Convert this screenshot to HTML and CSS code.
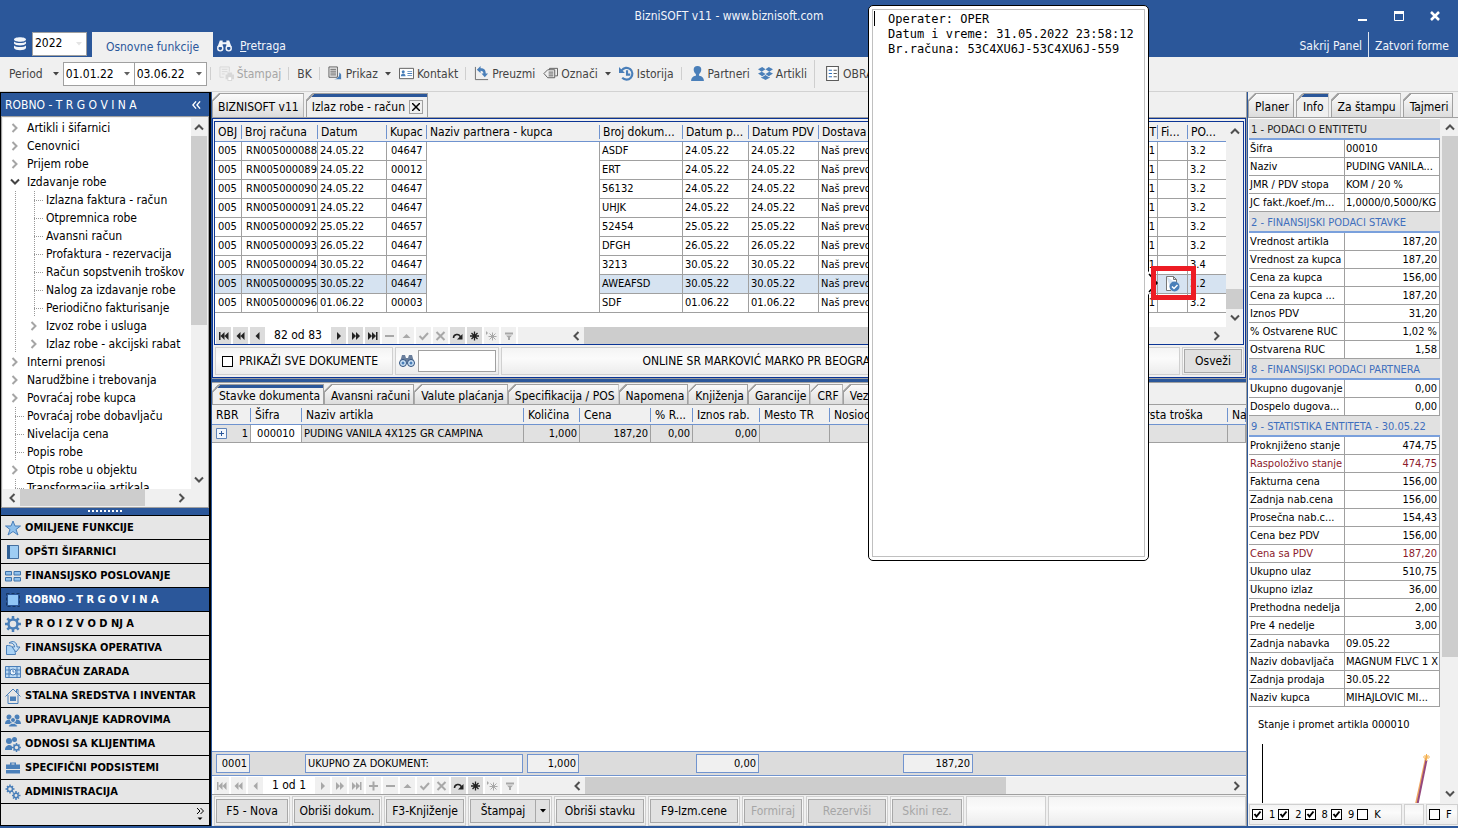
FILE: index.html
```html
<!DOCTYPE html>
<html lang="sr">
<head>
    <meta charset="UTF-8">
    <meta name="viewport" content="width=device-width, initial-scale=1.0">
    <title>BizniSOFT v11 - www.biznisoft.com</title>
    <link rel="stylesheet" href="styles.css">
</head>
<body>
<svg class="defs" aria-hidden="true">
    <symbol id="i-db" viewBox="0 0 12 14"><path d="M0 2.500C0-.5 12-.5 12 2.500S0 5.500 0 2.500zM0 4.500c2 2 10 2 12 0v2c-1 2.500-11 2.500-12 0zM0 8.500c2 2 10 2 12 0v2.500c-1 3-11 3-12 0z" fill="currentColor"/></symbol>
    <symbol id="i-binoc" viewBox="0 0 16 14"><path d="M3 1h3v2h4V1h3l2.500 7H10V5H6v3H.5z" fill="currentColor"/><circle cx="3.500" cy="9.500" r="2.700" fill="none" stroke="currentColor" stroke-width="1.500"/><circle cx="12.500" cy="9.500" r="2.700" fill="none" stroke="currentColor" stroke-width="1.500"/></symbol>
    <symbol id="i-print" viewBox="0 0 16 16"><path d="M1 12V1h10v5M3 3.500h6M3 6h6M3 8.500h3M1 12h4" fill="none" stroke="currentColor"/><path d="M7 9h9v5h-2v2H9v-2H7zM9 7h5v2H9z" fill="currentColor"/><path d="M10 12h3v3h-3z" fill="#fff"/></symbol>
    <symbol id="i-view" viewBox="0 0 16 16"><path d="M1 1h9v11H1zM2.500 3.500h6M2.500 5.500h6M2.500 7.500h6M2.500 9.500h6" fill="none" stroke="#5b5b5b"/><path d="M12 7a5 5 0 0 1 2 2v5H6.500c3 0 6-2 5.500-7z" fill="#4a7fb9"/></symbol>
    <symbol id="i-card" viewBox="0 0 16 12"><path d="M.5.500h15v11H.5z" fill="#fff" stroke="#5b5b5b"/><circle cx="4.500" cy="4" r="1.600" fill="#4a7fb9"/><path d="M2 9c0-4 5-4 5 0zM9 3.500h5v1H9zM9 5.500h5v1H9zM9 7.500h5v1H9z" fill="#4a7fb9"/></symbol>
    <symbol id="i-get" viewBox="0 0 16 16"><path d="M1.500 1v13.500H15" fill="none" stroke="#6b6b6b"/><path d="M3 4l4-4v2.500c4 0 5.500 2 5.500 5.500H15l-3.500 4L8 8h2c0-2-1-3-3-3v2.500z" fill="#4a7fb9"/></symbol>
    <symbol id="i-tag" viewBox="0 0 16 12"><path d="M1 6l4-4h7.500v8.500H5zM6 4.500h5M6 6.500h5M6 8.500h5M7 2V.5h8.500v8H13" fill="none" stroke="#5b5b5b"/></symbol>
    <symbol id="i-history" viewBox="0 0 14 14"><path d="M2.500 4A5.500 5.500 0 1 1 3 11M7.500 4v4h3" fill="none" stroke="#4a7fb9" stroke-width="2"/><path d="M0 1v5.500h5.500z" fill="#4a7fb9"/></symbol>
    <symbol id="i-user" viewBox="0 0 12 14"><path d="M6 0c5 0 4 6 1.500 7.500V9c3 .5 4.500 2 4.500 5H0c0-3 1.500-4.500 4.500-5V7.500C2 6 1 0 6 0z" fill="#4a7fb9"/></symbol>
    <symbol id="i-box" viewBox="0 0 16 14"><path d="M0 2.500L4.500 0 8 2.500 4 5zM16 2.500L11.500 0 8 2.500 12 5zM0 7l4-2 4 2.500L4.500 10zM16 7l-4-2-4 2.500 3.500 2.500zM3.500 10.500l1 .5L8 8.500l3.500 2.500 1-.5v1L8 14l-4.500-2.500z" fill="#4a7fb9"/></symbol>
    <symbol id="i-list" viewBox="0 0 12 14"><path d="M.5.500h11v13H.5z" fill="#fff" stroke="#5b5b5b"/><path d="M2.500 4h3M2.500 7h3M2.500 10h3" stroke="#2b6fbf"/><path d="M7 4h3M7 7h3M7 10h3" stroke="#5b5b5b"/></symbol>
    <symbol id="i-down" viewBox="0 0 6 4"><path d="M0 0h6L3 3.500z" fill="currentColor"/></symbol>
    <symbol id="i-chev" viewBox="0 0 8 10"><path d="M1.500 1l4 4-4 4" fill="none" stroke="currentColor" stroke-width="2"/></symbol>
    <symbol id="i-dbl" viewBox="0 0 10 8"><path d="M4.500 0L1 4l3.500 4M9 0L5.500 4 9 8" fill="none" stroke="currentColor" stroke-width="1.500"/></symbol>
    <symbol id="i-x" viewBox="0 0 8 8"><path d="M0 0l8 8M8 0L0 8" stroke="currentColor" stroke-width="1.500"/></symbol>
    <symbol id="i-star" viewBox="0 0 16 16"><path d="M8 1l2 5h5.500L11 9.500l2 5.500-5-3.500L3 15l2-5.500L.5 6H6z" fill="#8fc0ec" stroke="#4a7fb9"/></symbol>
    <symbol id="i-book" viewBox="0 0 16 16"><path d="M2.500 1.500h11v13h-11z" fill="#9fcdf3" stroke="#46709f"/><path d="M2 1h3v14H2z" fill="#2f5f94"/></symbol>
    <symbol id="i-grid" viewBox="0 0 16 16"><path d="M.5 3.500h6v3.500h-6zM9 3.500h6.500v3.500H9zM.5 9.500h6V13h-6zM9 9.500h6.500V13H9z" fill="#8fc0ec" stroke="#3f73ab"/></symbol>
    <symbol id="i-square" viewBox="0 0 16 16"><path d="M1.500 1.500h13v13h-13z" fill="none" stroke="#16345f" stroke-dasharray="3 2"/><path d="M3 3h10v10H3z" fill="#8fc4f5"/></symbol>
    <symbol id="i-gear" viewBox="0 0 16 16"><circle cx="8" cy="8" r="4.500" fill="none" stroke="#4a7fb9" stroke-width="2.500"/><path d="M8 0v3M8 13v3M0 8h3M13 8h3M2.300 2.300l2.200 2.200M11.500 11.500l2.200 2.200M2.300 13.700l2.200-2.200M11.500 4.500l2.200-2.200" stroke="#4a7fb9" stroke-width="2.500"/></symbol>
    <symbol id="i-share" viewBox="0 0 16 16"><path d="M1.500 5.500C7 5 10 8 10.500 14.500h-9z" fill="#a9d2f5" stroke="#4a7fb9"/><path d="M4 3c4-3 8-1 8 4h3l-4 5-4-5h2.500C9.500 4 7 2.500 4 3z" fill="#c5e0f7" stroke="#4a7fb9"/></symbol>
    <symbol id="i-money" viewBox="0 0 16 16"><path d="M.5 2.500h15v11H.5zM.5 6h15M.5 10h15M4 2.500v11M12 2.500v11" fill="#b9d8f3" stroke="#4a7fb9"/><circle cx="8" cy="8" r="3" fill="#eef6fd" stroke="#4a7fb9"/><path d="M8 6v2h1.500" fill="none" stroke="#4a7fb9"/></symbol>
    <symbol id="i-home" viewBox="0 0 16 16"><path d="M.5 8.500L8 1l7.500 7.500M3 7v8.500h10V7M11.500 4V1.500H13V6" fill="none" stroke="#4a7fb9"/><path d="M5 8.500h6v4.500H5z" fill="#4a7fb9"/></symbol>
    <symbol id="i-team" viewBox="0 0 16 16"><g fill="#4a7fb9"><circle cx="4" cy="5" r="2.500"/><circle cx="12" cy="5" r="2.500"/><path d="M0 12c0-5 5-5 6-3l4 0c1-2 6-2 6 3z"/></g><circle cx="8" cy="8" r="2.500" fill="#4a7fb9" stroke="#e6e6e6"/><path d="M3.500 15c0-5 9-5 9 0z" fill="#4a7fb9" stroke="#e6e6e6"/></symbol>
    <symbol id="i-crm" viewBox="0 0 16 16"><g fill="#4a7fb9"><circle cx="4" cy="5" r="3"/><circle cx="9.500" cy="3.500" r="2.500"/><path d="M0 14c0-6 7-6 7-3v3z"/></g><circle cx="11.500" cy="11.500" r="2.500" fill="none" stroke="#4a7fb9" stroke-width="1.500"/><path d="M11.500 7v2M11.500 14v2M7 11.500h2M14 11.500h2M8.500 8.500l1 1M13.500 13.500l1 1M8.500 14.500l1-1M13.500 9.500l1-1" stroke="#4a7fb9" stroke-width="1.500"/></symbol>
    <symbol id="i-case" viewBox="0 0 16 16"><path d="M1 4.500h4V2.500h6v2h4V9H1zM1 10h14v3.500H1zM6.500 4.500h3v-1h-3z" fill="#4a7fb9"/></symbol>
    <symbol id="i-cogs" viewBox="0 0 16 16"><g fill="none" stroke="#4a7fb9"><circle cx="5" cy="5" r="2.500" stroke-width="1.500"/><path d="M5 .5v2M5 7.500v2M.5 5h2M7.500 5h2M2 2l1 1M7 7l1 1M2 8l1-1M7 3l1-1" stroke-width="1.500"/><circle cx="11" cy="11.500" r="2.200" stroke-width="1.500"/><path d="M11 7v2M11 14v2M7 11.500h2M13.500 11.500h2M8 8.500l1 1M13 13.500l1 1M8 14.500l1-1M13 9.500l1-1" stroke-width="1.500"/></g></symbol>
    <symbol id="n-first" viewBox="0 0 15 16"><path d="M3 4h1.500v8H3zM8.500 4v8L4.500 8zM12.500 4v8l-4-4z" fill="currentColor"/></symbol>
    <symbol id="n-pprev" viewBox="0 0 15 16"><path d="M7.500 4v8l-4-4zM11.500 4v8l-4-4z" fill="currentColor"/></symbol>
    <symbol id="n-prev" viewBox="0 0 15 16"><path d="M9.500 4v8l-4-4z" fill="currentColor"/></symbol>
    <symbol id="n-next" viewBox="0 0 15 16"><path d="M6 4v8l4-4z" fill="currentColor"/></symbol>
    <symbol id="n-nnext" viewBox="0 0 15 16"><path d="M4 4v8l4-4zM8 4v8l4-4z" fill="currentColor"/></symbol>
    <symbol id="n-last" viewBox="0 0 15 16"><path d="M3 4v8l4-4zM7 4v8l4-4zM11 4h1.500v8H11z" fill="currentColor"/></symbol>
    <symbol id="n-plus" viewBox="0 0 15 16"><path d="M3 7h9v2H3zM6.500 3.500h2v9h-2z" fill="currentColor"/></symbol>
    <symbol id="n-minus" viewBox="0 0 15 16"><path d="M3 7h9v2H3z" fill="currentColor"/></symbol>
    <symbol id="n-up" viewBox="0 0 15 16"><path d="M3.500 10h8l-4-4z" fill="currentColor"/></symbol>
    <symbol id="n-ok" viewBox="0 0 15 16"><path d="M3.500 8l3 3 5.500-6" fill="none" stroke="currentColor" stroke-width="2"/></symbol>
    <symbol id="n-x" viewBox="0 0 15 16"><path d="M3.500 4l8 8M11.500 4l-8 8" stroke="currentColor" stroke-width="2"/></symbol>
    <symbol id="n-redo" viewBox="0 0 15 16"><path d="M3.500 10c0-4 5.500-5 7-1" fill="none" stroke="currentColor" stroke-width="1.500"/><path d="M12.500 6v5.500H7z" fill="currentColor"/></symbol>
    <symbol id="n-ast" viewBox="0 0 15 16"><path d="M7.500 3.500v9M3 8h9M4.500 5l6 6M10.500 5l-6 6" stroke="currentColor" stroke-width="1.300"/></symbol>
    <symbol id="n-goast" viewBox="0 0 15 16"><path d="M2 3v4l2-2z" fill="currentColor"/><path d="M8.500 4.500v8M4.500 8.500h8M5.500 5.500l6 6M11.500 5.500l-6 6" stroke="currentColor"/></symbol>
    <symbol id="n-filter" viewBox="0 0 15 16"><path d="M4 4.500h8v2H4zM5 7.500h6l-2 2V12H7V9.500z" fill="currentColor"/></symbol>
</svg>

<div class="app">
    <header class="titlebar">
        <h1>BizniSOFT v11 - www.biznisoft.com</h1>
        <div class="window-buttons">
            <button aria-label="Minimize"><svg viewBox="0 0 12 12"><path d="M1 9h9v2H1z" fill="#fff"/></svg></button>
            <button aria-label="Maximize"><svg viewBox="0 0 12 12"><path d="M1.500 1.500h9v9h-9z" fill="none" stroke="#fff"/><path d="M1 1h10v3H1z" fill="#fff"/></svg></button>
            <button aria-label="Close"><svg viewBox="0 0 12 12"><path d="M2 2l8 8M10 2l-8 8" stroke="#fff" stroke-width="2.500"/></svg></button>
        </div>
        <nav class="ribbon">
            <svg class="db-icon"><use href="#i-db"/></svg>
            <select class="combo year" aria-label="Godina"><option>2022</option></select>
            <button class="ribbon-tab active">Osnovne funkcije</button>
            <button class="ribbon-tab search"><svg class="binoc"><use href="#i-binoc"/></svg><span><u>P</u>retraga</span></button>
            <div class="ribbon-right">
                <button>Sakrij Panel</button>
                <button>Zatvori forme</button>
            </div>
        </nav>
    </header>

    <div class="toolbar">
        <button class="tool period">Period<svg class="arrow"><use href="#i-down"/></svg></button>
        <select class="combo date" aria-label="Datum od"><option>01.01.22</option></select>
        <select class="combo date" aria-label="Datum do"><option>03.06.22</option></select>
        <i class="sep"></i>
        <button class="tool" disabled><svg class="icon"><use href="#i-print"/></svg>Štampaj</button>
        <i class="sep"></i>
        <button class="tool">BK</button>
        <i class="sep"></i>
        <button class="tool"><svg class="icon"><use href="#i-view"/></svg>Prikaz<svg class="arrow"><use href="#i-down"/></svg></button>
        <button class="tool"><svg class="icon"><use href="#i-card"/></svg>Kontakt</button>
        <i class="sep"></i>
        <button class="tool"><svg class="icon"><use href="#i-get"/></svg>Preuzmi</button>
        <button class="tool"><svg class="icon"><use href="#i-tag"/></svg>Označi<svg class="arrow"><use href="#i-down"/></svg></button>
        <button class="tool"><svg class="icon"><use href="#i-history"/></svg>Istorija</button>
        <i class="sep"></i>
        <button class="tool"><svg class="icon"><use href="#i-user"/></svg>Partneri</button>
        <button class="tool"><svg class="icon"><use href="#i-box"/></svg>Artikli</button>
        <i class="sep tall"></i>
        <button class="tool"><svg class="icon"><use href="#i-list"/></svg>OBRAČUN</button>
    </div>

    <main class="workspace">
        <aside class="sidebar">
            <div class="sidebar-title"><h2>ROBNO - T R G O V I N A</h2><button aria-label="Sakrij"><svg class="dbl"><use href="#i-dbl"/></svg></button></div>
            <div class="tree-box">
                <ul class="tree">
                    <li><a href="#"><svg class="toggle"><use href="#i-chev"/></svg>Artikli i šifarnici</a></li>
                    <li><a href="#"><svg class="toggle"><use href="#i-chev"/></svg>Cenovnici</a></li>
                    <li><a href="#"><svg class="toggle"><use href="#i-chev"/></svg>Prijem robe</a></li>
                    <li><a href="#"><svg class="toggle open"><use href="#i-chev"/></svg>Izdavanje robe</a>
                        <ul>
                            <li><a href="#"><i class="line"></i>Izlazna faktura - račun</a></li>
                            <li><a href="#"><i class="line"></i>Otpremnica robe</a></li>
                            <li><a href="#"><i class="line"></i>Avansni račun</a></li>
                            <li><a href="#"><i class="line"></i>Profaktura - rezervacija</a></li>
                            <li><a href="#"><i class="line"></i>Račun sopstvenih troškov</a></li>
                            <li><a href="#"><i class="line"></i>Nalog za izdavanje robe</a></li>
                            <li><a href="#"><i class="line"></i>Periodično fakturisanje</a></li>
                            <li><a href="#"><svg class="toggle"><use href="#i-chev"/></svg>Izvoz robe i usluga</a></li>
                            <li><a href="#"><svg class="toggle"><use href="#i-chev"/></svg>Izlaz robe - akcijski rabat</a></li>
                        </ul>
                    </li>
                    <li><a href="#"><svg class="toggle"><use href="#i-chev"/></svg>Interni prenosi</a></li>
                    <li><a href="#"><svg class="toggle"><use href="#i-chev"/></svg>Narudžbine i trebovanja</a></li>
                    <li><a href="#"><svg class="toggle"><use href="#i-chev"/></svg>Povraćaj robe kupca</a></li>
                    <li><a href="#"><i class="line"></i>Povraćaj robe dobavljaču</a></li>
                    <li><a href="#"><i class="line"></i>Nivelacija cena</a></li>
                    <li><a href="#"><i class="line"></i>Popis robe</a></li>
                    <li><a href="#"><svg class="toggle"><use href="#i-chev"/></svg>Otpis robe u objektu</a></li>
                    <li><a href="#"><i class="line"></i>Transformacije artikala</a></li>
                </ul>
                <div class="vscroll"><svg class="up"><use href="#i-chev"/></svg><i class="thumb tree-v"></i><svg class="dn"><use href="#i-chev"/></svg></div>
                <div class="hscroll"><svg class="lt"><use href="#i-chev"/></svg><i class="thumb tree-h"></i><svg class="rt"><use href="#i-chev"/></svg></div>
            </div>
            <div class="grip"><i></i></div>
            <nav class="groups">
                <a href="#"><svg><use href="#i-star"/></svg>OMILJENE FUNKCIJE</a>
                <a href="#"><svg><use href="#i-book"/></svg>OPŠTI ŠIFARNICI</a>
                <a href="#"><svg><use href="#i-grid"/></svg>FINANSIJSKO POSLOVANJE</a>
                <a href="#" class="active"><svg><use href="#i-square"/></svg>ROBNO - T R G O V I N A</a>
                <a href="#"><svg><use href="#i-gear"/></svg>P R O I Z V O D NJ A</a>
                <a href="#"><svg><use href="#i-share"/></svg>FINANSIJSKA OPERATIVA</a>
                <a href="#"><svg><use href="#i-money"/></svg>OBRAČUN ZARADA</a>
                <a href="#"><svg><use href="#i-home"/></svg>STALNA SREDSTVA I INVENTAR</a>
                <a href="#"><svg><use href="#i-team"/></svg>UPRAVLJANJE KADROVIMA</a>
                <a href="#"><svg><use href="#i-crm"/></svg>ODNOSI SA KLIJENTIMA</a>
                <a href="#"><svg><use href="#i-case"/></svg>SPECIFIČNI PODSISTEMI</a>
                <a href="#"><svg><use href="#i-cogs"/></svg>ADMINISTRACIJA</a>
            </nav>
            <button class="more" aria-label="Još"><svg viewBox="0 0 8 13"><path d="M1 0l3 3-3 3M4.500 0l3 3-3 3" fill="none" stroke="#000"/><path d="M1.500 9.500h5L4 12z"/></svg></button>
        </aside>

        <section class="center">
            <div class="tabs doc-tabs">
                <button class="tab">BIZNISOFT v11</button>
                <button class="tab active">Izlaz robe - račun<span class="close"><svg><use href="#i-x"/></svg></span></button>
            </div>

            <div class="doc-frame">
                <div class="doc-grid">
                    <table class="grid invoices">
                        <colgroup><col class="w27"><col class="w76"><col class="w69"><col class="w40"><col class="w173"><col class="w83"><col class="w66"><col class="w70"><col><col class="w40"><col class="w30"><col class="w38"></colgroup>
                        <thead>
                            <tr><th>OBJ</th><th>Broj računa</th><th>Datum</th><th>Kupac</th><th>Naziv partnera - kupca</th><th>Broj dokum...</th><th>Datum p...</th><th>Datum PDV</th><th>Dostava</th><th class="num">T</th><th>Fi...</th><th>PO...</th></tr>
                        </thead>
                        <tbody>
                            <tr><td>005</td><td>RN005000088</td><td>24.05.22</td><td>04647</td><td rowspan="9" class="blank"></td><td>ASDF</td><td>24.05.22</td><td>24.05.22</td><td>Naš prevoz</td><td class="num">1</td><td></td><td>3.2</td></tr>
                            <tr><td>005</td><td>RN005000089</td><td>24.05.22</td><td>00012</td><td>ERT</td><td>24.05.22</td><td>24.05.22</td><td>Naš prevoz</td><td class="num">1</td><td></td><td>3.2</td></tr>
                            <tr><td>005</td><td>RN005000090</td><td>24.05.22</td><td>04647</td><td>56132</td><td>24.05.22</td><td>24.05.22</td><td>Naš prevoz</td><td class="num">1</td><td></td><td>3.2</td></tr>
                            <tr><td>005</td><td>RN005000091</td><td>24.05.22</td><td>04647</td><td>UHJK</td><td>24.05.22</td><td>24.05.22</td><td>Naš prevoz</td><td class="num">1</td><td></td><td>3.2</td></tr>
                            <tr><td>005</td><td>RN005000092</td><td>25.05.22</td><td>04657</td><td>52454</td><td>25.05.22</td><td>25.05.22</td><td>Naš prevoz</td><td class="num">1</td><td></td><td>3.2</td></tr>
                            <tr><td>005</td><td>RN005000093</td><td>26.05.22</td><td>04647</td><td>DFGH</td><td>26.05.22</td><td>26.05.22</td><td>Naš prevoz</td><td class="num">1</td><td></td><td>3.2</td></tr>
                            <tr><td>005</td><td>RN005000094</td><td>30.05.22</td><td>04647</td><td>3213</td><td>30.05.22</td><td>30.05.22</td><td>Naš prevoz</td><td class="num">1</td><td></td><td>3.4</td></tr>
                            <tr class="selected"><td>005</td><td>RN005000095</td><td>30.05.22</td><td>04647</td><td>AWEAFSD</td><td>30.05.22</td><td>30.05.22</td><td>Naš prevoz</td><td class="num">1</td><td class="fiscal"><svg viewBox="0 0 15 16"><path d="M1.500.500h7l3 3v4M6 14.500H1.500V.5M8.500.500v3h3" fill="#fff" stroke="#777"/><circle cx="9.500" cy="10.500" r="5" fill="#4a7fb9"/><path d="M7 10.500l2 2 3.500-3.500" fill="none" stroke="#fff" stroke-width="1.500"/></svg></td><td>3.2</td></tr>
                            <tr><td>005</td><td>RN005000096</td><td>01.06.22</td><td>00003</td><td>SDF</td><td>01.06.22</td><td>01.06.22</td><td>Naš prevoz</td><td class="num">1</td><td></td><td>3.2</td></tr>
                        </tbody>
                    </table>
                    <div class="vscroll"><svg class="up"><use href="#i-chev"/></svg><i class="thumb inv-v"></i><svg class="dn"><use href="#i-chev"/></svg></div>
                </div>
                <div class="navigator">
                    <button aria-label="Prvi"><svg><use href="#n-first"/></svg></button>
                    <button aria-label="Strana nazad"><svg><use href="#n-pprev"/></svg></button>
                    <button aria-label="Prethodni"><svg><use href="#n-prev"/></svg></button>
                    <span class="pos wide">82 od 83</span>
                    <button aria-label="Sledeći"><svg><use href="#n-next"/></svg></button>
                    <button aria-label="Strana napred"><svg><use href="#n-nnext"/></svg></button>
                    <button aria-label="Poslednji"><svg><use href="#n-last"/></svg></button>
                    <button aria-label="Obriši" disabled><svg><use href="#n-minus"/></svg></button>
                    <button aria-label="Izmeni" disabled><svg><use href="#n-up"/></svg></button>
                    <button aria-label="Potvrdi" disabled><svg><use href="#n-ok"/></svg></button>
                    <button aria-label="Otkaži" disabled><svg><use href="#n-x"/></svg></button>
                    <button aria-label="Osveži"><svg><use href="#n-redo"/></svg></button>
                    <button aria-label="Zapamti"><svg><use href="#n-ast"/></svg></button>
                    <button aria-label="Idi na zapamćeno" disabled><svg><use href="#n-goast"/></svg></button>
                    <button aria-label="Filter" disabled><svg><use href="#n-filter"/></svg></button>
                    <div class="hscroll"><svg class="lt"><use href="#i-chev"/></svg><i class="thumb inv-h"></i><svg class="rt"><use href="#i-chev"/></svg></div>
                </div>
                <div class="filter-bar">
                    <label class="cell all-docs"><input type="checkbox">PRIKAŽI SVE DOKUMENTE</label>
                    <div class="cell find"><svg class="find-icon" viewBox="0 0 16 14"><path d="M3 1h3l1 3h2l1-3h3l2 7H1z" fill="#6a7f9c"/><circle cx="4" cy="9" r="3.500" fill="#cfe4f7" stroke="#2d4f7c"/><circle cx="12" cy="9" r="3.500" fill="#cfe4f7" stroke="#2d4f7c"/><circle cx="4" cy="9" r="1.500" fill="#4a7fb9"/><circle cx="12" cy="9" r="1.500" fill="#4a7fb9"/></svg><input type="text" aria-label="Traži"></div>
                    <div class="cell client">ONLINE SR MARKOVIĆ MARKO PR BEOGRAD</div>
                    <div class="cell refresh"><button class="btn">Osveži</button></div>
                </div>
            </div>
            <div class="splitter"></div>

            <div class="tabs item-tabs">
                <button class="tab active">Stavke dokumenta</button>
                <button class="tab">Avansni računi</button>
                <button class="tab">Valute plaćanja</button>
                <button class="tab">Specifikacija / POS</button>
                <button class="tab">Napomena</button>
                <button class="tab">Knjiženja</button>
                <button class="tab">Garancije</button>
                <button class="tab">CRF</button>
                <button class="tab">Veze</button>
            </div>
            <div class="items-frame">
                <table class="grid items">
                    <colgroup><col class="w39"><col class="w51"><col class="w222"><col class="w56"><col class="w71"><col class="w42"><col class="w67"><col class="w70"><col><col class="w104"><col class="w18"></colgroup>
                    <thead>
                        <tr><th>RBR</th><th>Šifra</th><th>Naziv artikla</th><th>Količina</th><th>Cena</th><th>% R...</th><th>Iznos rab.</th><th>Mesto TR</th><th>Nosioc troška</th><th class="end">Vrsta troška</th><th class="clip">Na</th></tr>
                    </thead>
                    <tbody>
                        <tr><td class="rbr"><button class="expand" aria-label="Otvori"><svg viewBox="0 0 11 11"><path d="M.5.500h10v10H.5z" fill="#f3f7fc" stroke="#5f83b8"/><path d="M3 5.500h5M5.500 3v5" stroke="#2b579a"/></svg></button><span>1</span></td><td class="code">000010</td><td>PUDING VANILA 4X125 GR CAMPINA</td><td class="num">1,000</td><td class="num">187,20</td><td class="num">0,00</td><td class="num">0,00</td><td></td><td></td><td></td><td></td></tr>
                    </tbody>
                </table>
            </div>
            <div class="totals">
                <output class="t-count">0001</output>
                <output class="t-label">UKUPNO ZA DOKUMENT:</output>
                <output class="t-qty">1,000</output>
                <output class="t-rab">0,00</output>
                <output class="t-sum">187,20</output>
            </div>
            <div class="navigator lower">
                <button aria-label="Prvi" disabled><svg><use href="#n-first"/></svg></button>
                <button aria-label="Strana nazad" disabled><svg><use href="#n-pprev"/></svg></button>
                <button aria-label="Prethodni" disabled><svg><use href="#n-prev"/></svg></button>
                <span class="pos">1 od 1</span>
                <button aria-label="Sledeći" disabled><svg><use href="#n-next"/></svg></button>
                <button aria-label="Strana napred" disabled><svg><use href="#n-nnext"/></svg></button>
                <button aria-label="Poslednji" disabled><svg><use href="#n-last"/></svg></button>
                <button aria-label="Dodaj" disabled><svg><use href="#n-plus"/></svg></button>
                <button aria-label="Obriši" disabled><svg><use href="#n-minus"/></svg></button>
                <button aria-label="Izmeni" disabled><svg><use href="#n-up"/></svg></button>
                <button aria-label="Potvrdi" disabled><svg><use href="#n-ok"/></svg></button>
                <button aria-label="Otkaži" disabled><svg><use href="#n-x"/></svg></button>
                <button aria-label="Osveži"><svg><use href="#n-redo"/></svg></button>
                <button aria-label="Zapamti"><svg><use href="#n-ast"/></svg></button>
                <button aria-label="Idi na zapamćeno" disabled><svg><use href="#n-goast"/></svg></button>
                <button aria-label="Filter" disabled><svg><use href="#n-filter"/></svg></button>
                <div class="hscroll"><svg class="lt"><use href="#i-chev"/></svg><i class="thumb items-h"></i><svg class="rt"><use href="#i-chev"/></svg></div>
            </div>
            <div class="actions">
                <div class="cell"><button class="btn w72">F5 - Nova</button></div>
                <div class="cell"><button class="btn w86">Obriši dokum.</button></div>
                <div class="cell"><button class="btn w78">F3-Knjiženje</button></div>
                <div class="cell"><button class="btn w66">Štampaj</button><button class="btn drop" aria-label="Izbor štampe"><svg class="arrow"><use href="#i-down"/></svg></button></div>
                <div class="cell"><button class="btn w88">Obriši stavku</button></div>
                <div class="cell"><button class="btn w88">F9-Izm.cene</button></div>
                <div class="cell"><button class="btn w58" disabled>Formiraj</button></div>
                <div class="cell"><button class="btn w78" disabled>Rezerviši</button></div>
                <div class="cell"><button class="btn w70" disabled>Skini rez.</button></div>
                <div class="cell w80"></div>
                <div class="cell rest"></div>
            </div>
        </section>

        <aside class="info">
            <div class="tabs info-tabs">
                <button class="tab">Planer</button>
                <button class="tab active">Info</button>
                <button class="tab">Za štampu</button>
                <button class="tab">Tajmeri</button>
            </div>
            <div class="info-body">
                <div class="info-content">
                    <table class="props">
                        <colgroup><col class="w96"><col></colgroup>
                        <tr class="dark"><th colspan="2">1 - PODACI O ENTITETU</th></tr>
                        <tr><td>Šifra</td><td>00010</td></tr>
                        <tr><td>Naziv</td><td>PUDING VANILA...</td></tr>
                        <tr><td>JMR / PDV stopa</td><td>KOM / 20 %</td></tr>
                        <tr><td>JC fakt./koef./m...</td><td>1,0000/0,5000/KG</td></tr>
                        <tr><th colspan="2">2 - FINANSIJSKI PODACI STAVKE</th></tr>
                        <tr><td>Vrednost artikla</td><td class="num">187,20</td></tr>
                        <tr><td>Vrednost za kupca</td><td class="num">187,20</td></tr>
                        <tr><td>Cena za kupca</td><td class="num">156,00</td></tr>
                        <tr><td>Cena za kupca ...</td><td class="num">187,20</td></tr>
                        <tr><td>Iznos PDV</td><td class="num">31,20</td></tr>
                        <tr><td>% Ostvarene RUC</td><td class="num">1,02 %</td></tr>
                        <tr><td>Ostvarena RUC</td><td class="num">1,58</td></tr>
                        <tr><th colspan="2">8 - FINANSIJSKI PODACI PARTNERA</th></tr>
                        <tr><td>Ukupno dugovanje</td><td class="num">0,00</td></tr>
                        <tr><td>Dospelo dugova...</td><td class="num">0,00</td></tr>
                        <tr><th colspan="2">9 - STATISTIKA ENTITETA - 30.05.22</th></tr>
                        <tr><td>Proknjiženo stanje</td><td class="num">474,75</td></tr>
                        <tr class="red"><td>Raspoloživo stanje</td><td class="num">474,75</td></tr>
                        <tr><td>Fakturna cena</td><td class="num">156,00</td></tr>
                        <tr><td>Zadnja nab.cena</td><td class="num">156,00</td></tr>
                        <tr><td>Prosečna nab.c...</td><td class="num">154,43</td></tr>
                        <tr><td>Cena bez PDV</td><td class="num">156,00</td></tr>
                        <tr class="red"><td>Cena sa PDV</td><td class="num">187,20</td></tr>
                        <tr><td>Ukupno ulaz</td><td class="num">510,75</td></tr>
                        <tr><td>Ukupno izlaz</td><td class="num">36,00</td></tr>
                        <tr><td>Prethodna nedelja</td><td class="num">2,00</td></tr>
                        <tr><td>Pre 4 nedelje</td><td class="num">3,00</td></tr>
                        <tr><td>Zadnja nabavka</td><td>09.05.22</td></tr>
                        <tr><td>Naziv dobavljača</td><td>MAGNUM FLVC 1 X</td></tr>
                        <tr><td>Zadnja prodaja</td><td>30.05.22</td></tr>
                        <tr><td>Naziv kupca</td><td>MIHAJLOVIC MI...</td></tr>
                    </table>
                    <h3>Stanje i promet artikla 000010</h3>
                    <svg class="chart" viewBox="0 0 190 60"><path d="M13.500 0v60" stroke="#000"/><path d="M167 60l10-46" stroke="#f0a860" stroke-width="2"/><path d="M168.500 60l9-44" stroke="#94487e" stroke-width="2"/><path d="M174 13h7M177.500 10v7M175.500 11l4 4M179.500 11l-4 4" stroke="#f5b04c"/></svg>
                </div>
                <div class="vscroll"><svg class="up"><use href="#i-chev"/></svg><i class="thumb info-v"></i><svg class="dn"><use href="#i-chev"/></svg></div>
            </div>
            <div class="info-foot">
                <div class="cell checks">
                    <label><input type="checkbox" checked>1</label>
                    <label><input type="checkbox" checked>2</label>
                    <label><input type="checkbox" checked>8</label>
                    <label><input type="checkbox" checked>9</label>
                    <label><input type="checkbox">K</label>
                </div>
                <div class="cell spacer"></div>
                <div class="cell last"><label><input type="checkbox">F</label></div>
            </div>
        </aside>
    </main>

    <div class="hint">
        <pre>Operater: OPER
Datum i vreme: 31.05.2022 23:58:12
Br.računa: 53C4XU6J-53C4XU6J-559</pre>
        <svg class="pointer" viewBox="0 0 12 24"><path d="M0 0l9 12-9 12z" fill="#fff"/><path d="M1 3l8 9-8 9" fill="none" stroke="#000" stroke-width="1.500"/></svg>
    </div>
    <div class="marker"></div>
</div>
</body>
</html>
```
FILE: styles.css
```css
* {
    box-sizing: border-box;
    margin: 0;
    padding: 0;
}

body {
    font-family: "DejaVu Sans Condensed", "Noto Sans", sans-serif;
    font-size: 12px;
    line-height: 16px;
    color: #000;
    background: #f0f0f0;
    overflow: hidden;
}

button, input, select {
    font: inherit;
    color: inherit;
    background: none;
    border: none;
    white-space: nowrap;
}

a {
    color: inherit;
    text-decoration: none;
}

svg {
    display: block;
    flex: none;
}

.defs {
    position: absolute;
    width: 0;
    height: 0;
}

.app {
    position: relative;
    display: flex;
    flex-direction: column;
    height: 100vh;
    border-bottom: 2px solid #2b579a;
}

/* title bar and ribbon */
.titlebar {
    flex: none;
    display: grid;
    grid-template-columns: 1fr auto 1fr;
    grid-template-rows: 32px 25px;
    background: #2b579a;
    color: #f2f5fa;
}

.titlebar h1 {
    grid-column: 2;
    font-size: 12px;
    font-weight: normal;
    line-height: 32px;
}

.window-buttons {
    display: flex;
    justify-content: flex-end;
    align-items: center;
    gap: 24px;
    padding-right: 17px;
}

.window-buttons svg {
    width: 12px;
    height: 12px;
}

.ribbon {
    grid-column: 1 / 4;
    display: flex;
    align-items: stretch;
}

.db-icon {
    width: 12px;
    height: 14px;
    margin: 5px 6px 0 14px;
}

.combo {
    appearance: none;
    color: #000;
    border: 1px solid #a0a0a0;
    background: #fff url("data:image/svg+xml,%3Csvg xmlns='http://www.w3.org/2000/svg' width='6' height='4'%3E%3Cpath d='M0 0h6L3 3.500z' fill='%23606060'/%3E%3C/svg%3E") no-repeat right 4px center;
}

.combo.year {
    width: 55px;
    height: 24px;
    padding: 0 2px 2px;
    background-image: url("data:image/svg+xml,%3Csvg xmlns='http://www.w3.org/2000/svg' width='6' height='4'%3E%3Cpath d='M0 0h6L3 3.500z' fill='%23e4e4e4'/%3E%3C/svg%3E");
}

.ribbon-tab {
    display: flex;
    align-items: center;
    gap: 8px;
}

.ribbon-tab.active {
    width: 121px;
    justify-content: center;
    margin-left: 5px;
    padding-top: 4px;
    background: #f0f0f0;
    color: #2b579a;
}

.ribbon-tab.search {
    padding: 2px 0 0 4px;
}

.binoc {
    width: 15px;
    height: 14px;
}

.ribbon-right {
    display: flex;
    margin-left: auto;
    padding-right: 3px;
}

.ribbon-right button {
    padding: 2px 6px 0;
}

.ribbon-right button + button {
    border-left: 1px solid #dfe5ef;
}

.toolbar {
    flex: none;
    display: flex;
    align-items: center;
    height: 35px;
    padding: 0 0 1px 9px;
    border-bottom: 1px solid #d2d2d2;
    color: #444;
    overflow: hidden;
}

.tool {
    display: flex;
    align-items: center;
    gap: 3px;
    padding: 0 4px;
}

.tool.period {
    padding: 0 4px 0 0;
}

.tool:disabled {
    color: #a6a6a6;
}

.tool:disabled .icon {
    color: #d8d8d8;
}

.icon {
    width: 15px;
    height: 15px;
}

.arrow {
    width: 6px;
    height: 4px;
    margin: 0 0 0 4px;
}

.tool.period .arrow {
    margin-left: 7px;
}

.combo.date {
    width: 72px;
    height: 24px;
    padding-left: 2px;
}

.combo.date + .combo.date {
    border-left-width: 0;
}

.sep {
    width: 1px;
    height: 13px;
    margin: 0 4px 0 3px;
    background: #cfcfcf;
}

.sep.tall {
    height: 28px;
    margin-right: 6px;
}

.workspace {
    flex: 1;
    min-height: 0;
    display: flex;
}

/* left panel */
.sidebar {
    flex: none;
    width: 211px;
    display: flex;
    flex-direction: column;
    border: 1px solid #000;
    border-right: 2px solid #000;
}

.sidebar-title {
    display: flex;
    align-items: center;
    justify-content: space-between;
    height: 23px;
    padding: 0 8px 0 4px;
    background: #2b579a;
    color: #fff;
}

.sidebar-title h2 {
    font-size: 12px;
    font-weight: normal;
}

.dbl {
    width: 9px;
    height: 8px;
}

.tree-box {
    flex: 1;
    min-height: 0;
    display: grid;
    grid-template-columns: 1fr 16px;
    grid-template-rows: minmax(0, 1fr) 17px;
    padding: 1px;
    border: 1px solid #a0a0a0;
    background: #f0f0f0;
}

.tree {
    padding-top: 1px;
    overflow: hidden;
    background: #fff;
}

.tree ul {
    padding-left: 19px;
    background: repeating-linear-gradient(#999 0 1px, transparent 1px 2px) 12px 0 / 1px 100% no-repeat;
}

.tree li {
    list-style: none;
}

.tree a {
    display: flex;
    align-items: center;
    height: 18px;
    padding-left: 8px;
    white-space: nowrap;
}

.toggle {
    width: 8px;
    height: 10px;
    margin-right: 8px;
    color: #a5a5a5;
}

.toggle.open {
    transform: rotate(90deg);
    color: #444;
}

.line {
    flex: none;
    width: 9px;
    height: 18px;
    margin: 0 3px 0 4px;
    background:
        repeating-linear-gradient(90deg, #999 0 1px, transparent 1px 2px) 0 9px / 9px 1px no-repeat,
        repeating-linear-gradient(#999 0 1px, transparent 1px 2px) 0 0 / 1px 100% no-repeat;
}

.vscroll, .hscroll {
    display: flex;
    align-items: center;
    background: #f0f0f0;
    color: #505050;
}

.vscroll {
    flex-direction: column;
    padding: 4px 0;
}

.hscroll {
    padding: 0 5px;
}

.vscroll svg, .hscroll svg {
    width: 8px;
    height: 10px;
}

.vscroll .up {
    transform: rotate(-90deg);
}

.vscroll .dn {
    transform: rotate(90deg);
    margin-top: auto;
}

.hscroll .lt {
    transform: rotate(180deg);
}

.hscroll .rt {
    margin-left: auto;
}

.thumb {
    background: #cdcdcd;
}

.vscroll .thumb {
    width: 100%;
    margin-top: 4px;
}

.hscroll .thumb {
    height: 100%;
    margin-left: 4px;
}

.tree-v {
    height: 52%;
}

.tree-h {
    width: 70%;
}

.grip {
    height: 7px;
    padding-top: 2px;
    background: #2b579a;
}

.grip i {
    display: block;
    width: 35px;
    height: 2px;
    margin: 0 auto;
    background: repeating-linear-gradient(90deg, #fff 0 2px, transparent 2px 4px);
}

.groups a {
    display: flex;
    align-items: center;
    gap: 4px;
    height: 24px;
    padding-left: 4px;
    border-top: 1px solid #000;
    background: #e6e6e6;
    font-size: 11px;
    font-weight: bold;
    white-space: nowrap;
}

.groups a.active {
    background: #2b579a;
    color: #fff;
}

.groups svg {
    width: 16px;
    height: 16px;
}

.more {
    display: flex;
    justify-content: flex-end;
    align-items: center;
    height: 22px;
    padding-right: 5px;
    border-top: 1px solid #000;
    background: #e6e6e6;
}

.more svg {
    width: 8px;
    height: 13px;
}

/* tabs with a cut corner */
.tabs {
    flex: none;
    display: flex;
    gap: 2px;
    padding-top: 1px;
    overflow: hidden;
    border-bottom: 1px solid #a0a0a0;
}

.tab {
    display: flex;
    align-items: center;
    height: 24px;
    padding: 3px 4px 0 5px;
    border: 1px solid #a0a0a0;
    border-bottom: none;
    background:
        linear-gradient(135deg, #a0a0a0 0 5px, transparent 5px) no-repeat,
        linear-gradient(#fbfbfb, #dcdcdc);
    clip-path: polygon(7px 0, 100% 0, 100% 100%, 0 100%, 0 7px);
}

.tab.active {
    background:
        linear-gradient(135deg, #a0a0a0 0 5px, transparent 5px) no-repeat,
        linear-gradient(#2b579a 0 3px, #f0f0f0 3px);
}

.close {
    display: flex;
    padding: 2px;
    margin-left: 4px;
    border: 1px solid #a0a0a0;
}

.close svg {
    width: 8px;
    height: 8px;
}

/* documents */
.center {
    flex: 1;
    min-width: 0;
    display: flex;
    flex-direction: column;
    border-left: 1px solid #2b579a;
    border-right: 1px solid #a0a0a0;
}

.doc-frame {
    flex: none;
    padding: 2px 1px 0;
    border: 1px solid #0b3595;
}

.doc-grid {
    display: flex;
    height: 206px;
    border: 1px solid #0b3595;
    border-bottom: none;
    background: #fff;
}

.doc-grid .vscroll {
    flex: none;
    width: 17px;
}

.inv-v {
    height: 20px;
}

.vscroll .inv-v {
    margin-top: auto;
}

.vscroll .inv-v + .dn {
    margin-top: 4px;
}

.grid {
    table-layout: fixed;
    border-spacing: 0;
    width: 100%;
}

.invoices {
    flex: 1;
    min-width: 0;
    align-self: flex-start;
}

.grid th, .grid td {
    overflow: hidden;
    white-space: nowrap;
    text-align: left;
}

.grid th {
    height: 20px;
    padding: 0 0 0 3px;
    font-weight: normal;
    border-bottom: 1px solid #6f93cf;
    background: linear-gradient(#6f93cf, #6f93cf) right center / 1px 14px no-repeat #f0f0f0;
}

.grid th.end {
    padding-right: 25px;
    text-align: right;
}

.grid td {
    height: 19px;
    padding: 0 2px;
    font-size: 11px;
    line-height: 16px;
    border-right: 1px solid #a0a0a0;
    border-bottom: 1px solid #a0a0a0;
    background: #fff;
}

.invoices td:first-child {
    padding-left: 3px;
}

.invoices td:nth-child(4), .invoices td:nth-child(2) {
    padding: 0 0 0 4px;
}

.invoices th:last-child {
    background-image: none;
}

.invoices td:last-child {
    border-right: none;
}

.grid .num {
    padding-right: 2px;
    text-align: right;
}

.selected td {
    background: #d6e3f1;
}

.grid .blank {
    background: #fff;
}

.fiscal svg {
    width: 15px;
    height: 16px;
    margin: 0 auto;
}

.w18 { width: 18px; }
.w27 { width: 27px; }
.w30 { width: 30px; }
.w38 { width: 38px; }
.w39 { width: 39px; }
.w40 { width: 40px; }
.w42 { width: 42px; }
.w51 { width: 51px; }
.w56 { width: 56px; }
.w58 { width: 58px; }
.w66 { width: 66px; }
.w67 { width: 67px; }
.w69 { width: 69px; }
.w70 { width: 70px; }
.w71 { width: 71px; }
.w72 { width: 72px; }
.w76 { width: 76px; }
.w78 { width: 78px; }
.w80 { width: 80px; }
.w83 { width: 83px; }
.w86 { width: 86px; }
.w88 { width: 88px; }
.w96 { width: 96px; }
.w104 { width: 104px; }
.w173 { width: 173px; }
.w222 { width: 222px; }

.navigator {
    flex: none;
    display: flex;
    gap: 2px;
    height: 18px;
    padding-left: 1px;
    background: #fff;
    border: 1px solid #0b3595;
    border-top: none;
}

.navigator button {
    width: 15px;
    background: #dcdcdc;
    color: #222;
}

.navigator button:disabled {
    background: #f0f0f0;
    color: #a8a8a8;
}

.navigator button svg {
    width: 15px;
    height: 16px;
}

.pos {
    width: 48px;
    text-align: center;
    white-space: nowrap;
}

.pos.wide {
    width: 62px;
}

.navigator .hscroll {
    flex: 1;
    padding-left: 54px;
}

.navigator:not(.lower) .hscroll {
    padding-right: 22px;
}

.inv-h {
    width: 80%;
}

.filter-bar {
    display: flex;
    gap: 2px;
    height: 32px;
    padding: 2px 0 2px 1px;
}

.cell {
    display: flex;
    align-items: center;
    border: 1px solid #d0d0d0;
    background: linear-gradient(#f4f4f4, #fbfbfb 40%, #ececec);
}

.all-docs {
    width: 178px;
    padding-left: 6px;
    gap: 6px;
    white-space: nowrap;
}

input[type="checkbox"] {
    appearance: none;
    flex: none;
    width: 11px;
    height: 11px;
    border: 1px solid #000;
    background: #fff;
}

input[type="checkbox"]:checked {
    background: #fff url("data:image/svg+xml,%3Csvg xmlns='http://www.w3.org/2000/svg' width='9' height='9'%3E%3Cpath d='M1.500 4l2 2.500 4-5' fill='none' stroke='%23000' stroke-width='2'/%3E%3C/svg%3E") center no-repeat;
}

.find {
    width: 104px;
    padding: 0 1px 0 3px;
    gap: 3px;
}

.find-icon {
    width: 16px;
    height: 14px;
}

.find input {
    width: 78px;
    height: 22px;
    border: 1px solid #a0a0a0;
    background: #fff;
}

.client {
    flex: 1;
    justify-content: center;
    padding-right: 160px;
}

.refresh {
    padding: 1px;
}

.btn {
    height: 24px;
    border: 1px solid #a8a8a8;
    background: #e1e1e1;
    text-align: center;
}

.btn:disabled {
    color: #a6a6a6;
    background: #dcdcdc;
}

.refresh .btn {
    width: 58px;
}

.splitter {
    flex: none;
    height: 5px;
    border: solid #a0a0a0;
    border-width: 1px 0;
    background: #2b579a;
}

/* document items */
.item-tabs {
    gap: 0;
}

.item-tabs .tab {
    height: 20px;
    padding: 2px 3px 0 6px;
}

.items-frame {
    flex: 1;
    min-height: 0;
    background: #fff;
}

.items th {
    padding-left: 4px;
}

.items td {
    height: 18px;
    background: #e1e1e1;
}

.rbr span {
    float: right;
}

.expand {
    float: left;
    margin: 2px 0 0 2px;
}

.expand svg {
    width: 11px;
    height: 11px;
}

.items .code {
    background: #fff;
    text-align: center;
}

.totals {
    flex: none;
    display: grid;
    grid-template-columns: 34px 55px 218px 4px 52px 117px 63px 144px 70px;
    align-items: center;
    height: 25px;
    padding-left: 4px;
    border: solid #7194cf;
    border-width: 1px 0;
    background: #dcdcdc;
    font-size: 11px;
}

.totals output {
    height: 19px;
    padding: 0 2px;
    line-height: 17px;
    border: 1px solid #7194cf;
    background: #f0f0f0;
    text-align: right;
}

.totals .t-count { grid-column: 1; }
.totals .t-label { grid-column: 3; text-align: left; }
.totals .t-qty { grid-column: 5; }
.totals .t-rab { grid-column: 7; }
.totals .t-sum { grid-column: 9; }

.navigator.lower {
    height: 19px;
    padding: 1px 0 0 2px;
    border: none;
    border-bottom: 1px solid #a0a0a0;
}

.items-h {
    width: 63%;
}

.actions {
    flex: none;
    display: flex;
    gap: 2px;
    height: 31px;
    padding: 1px 0 0 2px;
}

.actions .cell {
    flex: none;
    padding: 1px;
}

.actions .cell.rest {
    flex: 1;
}

.btn.drop {
    width: 14px;
    border-left: none;
}

.btn.drop .arrow {
    margin: 0 auto;
}

/* info panel */
.info {
    flex: none;
    width: 211px;
    display: flex;
    flex-direction: column;
    border-left: 1px solid #2b579a;
}

.info-tabs .tab {
    padding: 3px 4px 0 6px;
}

.info-body {
    flex: 1;
    min-height: 0;
    display: flex;
    background: #fff;
}

.info-content {
    flex: 1;
    min-width: 0;
    padding: 1px 0 0 1px;
    overflow: hidden;
}

.info-body .vscroll {
    width: 18px;
    border-left: 2px solid #f0f0f0;
}

.info-v {
    height: 77%;
}

.props {
    table-layout: fixed;
    border-spacing: 0;
    width: 100%;
    font-size: 11px;
}

.props th, .props td {
    overflow: hidden;
    white-space: nowrap;
    text-align: left;
    line-height: 16px;
}

.props th {
    height: 21px;
    padding: 2px 2px 0;
    font-weight: normal;
    color: #3f6fbd;
    background: #e1e1e1;
    border-bottom: 2px solid #7aa0dc;
}

.props .dark th {
    color: #222;
}

.props td {
    height: 18px;
    padding: 0 0 0 1px;
    border-right: 1px solid #a0a0a0;
    border-bottom: 1px solid #a0a0a0;
}

.props .num {
    padding-right: 2px;
    text-align: right;
}

.props .red td {
    color: #8b1a2b;
}

.info h3 {
    margin: 10px 0 11px 9px;
    font-size: 11px;
    font-weight: normal;
}

.chart {
    width: 190px;
    height: 60px;
}

.info-foot {
    flex: none;
    display: flex;
    gap: 2px;
    height: 23px;
    padding: 1px 0 1px 1px;
    font-size: 11px;
}

.checks {
    flex: 1;
    gap: 3px;
    padding-left: 2px;
}

.info-foot label {
    display: flex;
    align-items: center;
    gap: 6px;
}

.spacer {
    width: 20px;
}

.last {
    width: 32px;
    padding-left: 2px;
}

/* receipt hint over the grid */
.hint {
    position: absolute;
    top: 5px;
    right: 309px;
    width: 281px;
    height: 556px;
    padding: 3px;
    border: 1px solid #000;
    border-radius: 5px;
    background: #fff;
}

.hint pre {
    height: 100%;
    padding: 2px 0 0 15px;
    border: 1px solid #c0c0c0;
    font-family: "DejaVu Sans Mono", "Liberation Mono", monospace;
    font-size: 12px;
    line-height: 15px;
}

.hint pre::before {
    content: "";
    position: absolute;
    top: 5px;
    left: 5px;
    width: 1px;
    height: 15px;
    background: #000;
}

.pointer {
    position: absolute;
    top: 265px;
    right: -12px;
    width: 12px;
    height: 24px;
}

.marker {
    position: absolute;
    top: 266px;
    right: 262px;
    width: 45px;
    height: 34px;
    border: 5px solid #ed1c24;
}
```
